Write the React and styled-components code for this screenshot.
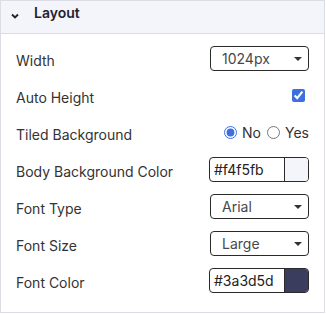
import React from "react";
import styled, { createGlobalStyle } from "styled-components";

const Global = createGlobalStyle`
  html, body { margin: 0; padding: 0; background: #ffffff; }
  body { font-family: Inter, "Noto Sans", sans-serif; }
`;

const Panel = styled.section`
  box-sizing: border-box;
  width: 325px;
  height: 313px;
  border: 1px solid #dcdde4;
  background: #fff;
  display: flex;
  flex-direction: column;
`;

const Header = styled.div`
  box-sizing: border-box;
  height: 33px;
  flex: none;
  background: #f4f5fb;
  border-bottom: 1px solid #dcdde4;
  display: flex;
  align-items: flex-start;
  padding: 3px 0 0 10px;
  gap: 15px;
  font-size: 14px;
  line-height: 17px;
  font-weight: 600;
  color: #1f2230;
`;

const Chevron = styled.svg`
  margin-top: 9px;
  flex: none;
`;

const Body = styled.div`
  display: flex;
  flex-direction: column;
  gap: 12px;
  padding: 12px 15px 0 15px;
`;

const Row = styled.div`
  height: 25px;
  display: flex;
  align-items: center;
  justify-content: space-between;
`;

const Label = styled.span`
  font-size: 14px;
  color: #333;
  padding-top: 4px;
`;

const SelectWrap = styled.div`
  position: relative;
  width: 99px;
  height: 25px;
`;

const Select = styled.select`
  appearance: none;
  box-sizing: border-box;
  width: 100%;
  height: 100%;
  border: 1px solid #2a2a2a;
  border-radius: 4px;
  background: #fff;
  padding: 0 0 0 11px;
  font-family: Inter, "Noto Sans", sans-serif;
  font-size: 14px;
  color: #484848;
  outline: none;
`;

const Caret = styled.span`
  position: absolute;
  right: 7px;
  top: 11px;
  width: 0;
  height: 0;
  border-left: 4px solid transparent;
  border-right: 4px solid transparent;
  border-top: 4px solid #333;
  pointer-events: none;
`;

const Check = styled.input`
  width: 13px;
  height: 13px;
  margin: 0 4px 0 0;
  accent-color: #3d6fe0;
`;

const RadioGroup = styled.div`
  display: flex;
  align-items: center;
  font-size: 14px;
  color: #333;
`;

const RadioLabel = styled.label`
  display: flex;
  align-items: center;
`;

const Radio = styled.input`
  width: 13px;
  height: 13px;
  margin: 0 5px 0 ${(p) => p.$ml}px;
  accent-color: #3d6fe0;
`;

const ColorBox = styled.div`
  box-sizing: border-box;
  width: 100px;
  height: 25px;
  border: 1px solid #2a2a2a;
  border-radius: 4px;
  display: flex;
  overflow: hidden;
`;

const ColorText = styled.span`
  flex: 1;
  display: flex;
  align-items: center;
  padding-left: 4px;
  font-size: 14px;
  color: #222;
`;

const Swatch = styled.span`
  width: 23px;
  border-left: 1px solid #2a2a2a;
  background: ${(p) => p.$c};
`;

const Dropdown = ({ value }) => (
  <SelectWrap>
    <Select defaultValue={value}>
      <option>{value}</option>
    </Select>
    <Caret />
  </SelectWrap>
);

export default function App() {
  return (
    <>
      <Global />
      <Panel>
        <Header>
          <Chevron width="8" height="6" viewBox="0 0 8 6" fill="none">
            <path d="M1 1.5 L4 4.5 L7 1.5" stroke="#1f2230" strokeWidth="1.9" />
          </Chevron>
          <span>Layout</span>
        </Header>
        <Body>
          <Row>
            <Label>Width</Label>
            <Dropdown value="1024px" />
          </Row>
          <Row>
            <Label>Auto Height</Label>
            <Check type="checkbox" defaultChecked />
          </Row>
          <Row>
            <Label>Tiled Background</Label>
            <RadioGroup>
              <RadioLabel>
                <Radio type="radio" name="tiled" defaultChecked $ml={0} />
                No
              </RadioLabel>
              <RadioLabel>
                <Radio type="radio" name="tiled" $ml={6} />
                Yes
              </RadioLabel>
            </RadioGroup>
          </Row>
          <Row>
            <Label>Body Background Color</Label>
            <ColorBox>
              <ColorText>#f4f5fb</ColorText>
              <Swatch $c="#f4f5fb" />
            </ColorBox>
          </Row>
          <Row>
            <Label>Font Type</Label>
            <Dropdown value="Arial" />
          </Row>
          <Row>
            <Label>Font Size</Label>
            <Dropdown value="Large" />
          </Row>
          <Row>
            <Label>Font Color</Label>
            <ColorBox>
              <ColorText>#3a3d5d</ColorText>
              <Swatch $c="#3a3d5d" />
            </ColorBox>
          </Row>
        </Body>
      </Panel>
    </>
  );
}
